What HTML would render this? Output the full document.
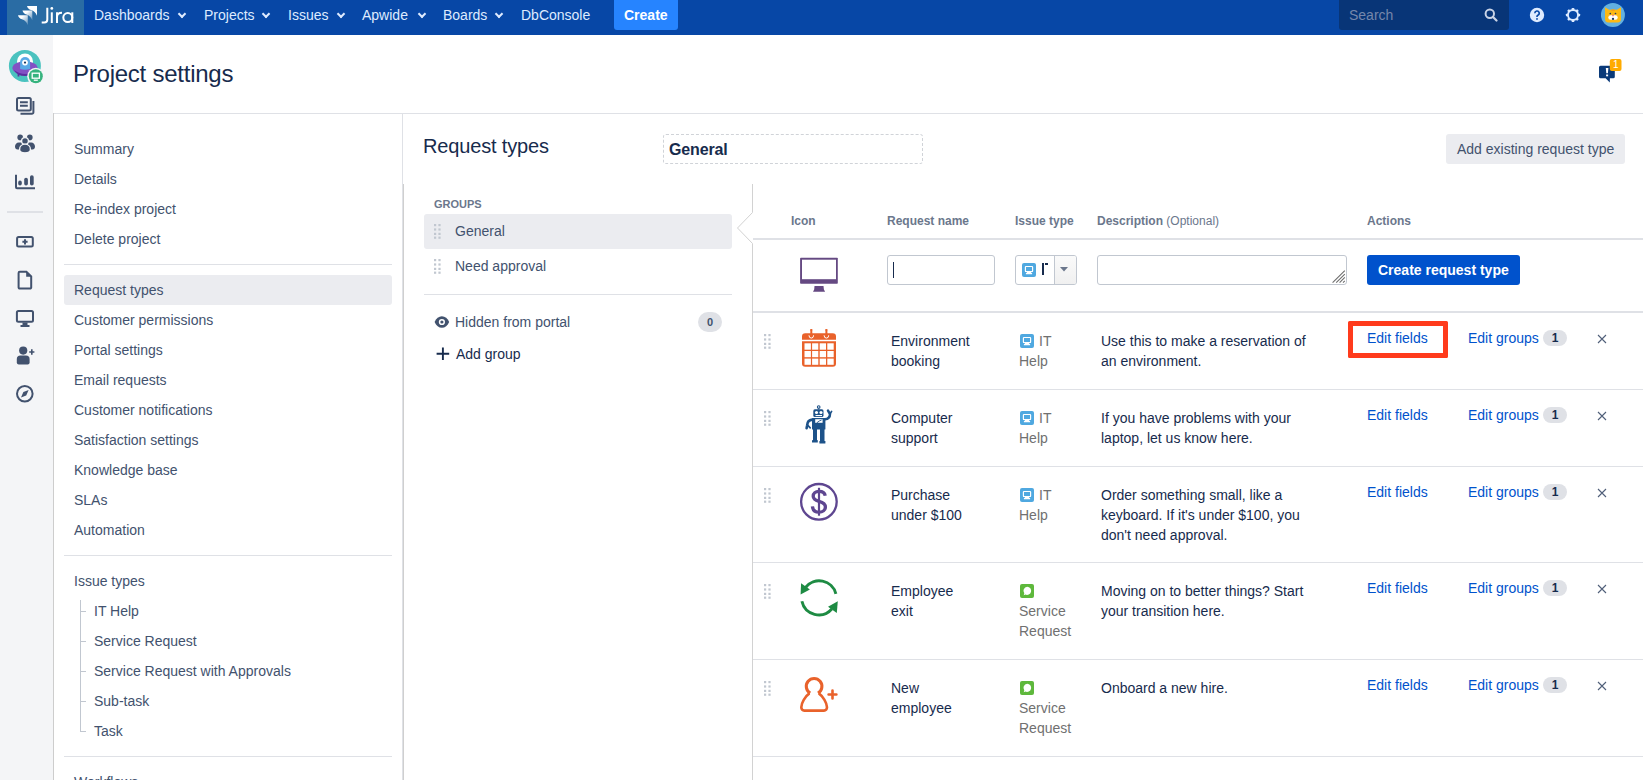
<!DOCTYPE html>
<html><head><meta charset="utf-8">
<style>
*{box-sizing:border-box;margin:0;padding:0}
html,body{width:1643px;height:780px;overflow:hidden;background:#fff;font-family:"Liberation Sans",sans-serif;font-size:14px;color:#172b4d}
.a{position:absolute;white-space:nowrap}
#nav{position:absolute;left:0;top:0;width:1643px;height:35px;background:#0747a6}
#logo{position:absolute;left:7px;top:0;width:77px;height:35px;background:#2a6ca4}
.ni{position:absolute;top:7px;color:#deebff;font-size:14px;line-height:16px;white-space:nowrap}
.chev{position:absolute;top:3.5px;width:6px;height:6px;border-right:2px solid #deebff;border-bottom:2px solid #deebff;transform:rotate(45deg)}
#side{position:absolute;left:0;top:35px;width:53px;height:745px;background:#f4f5f7}
.nl{position:absolute;left:74px;color:#42526e;font-size:14px;line-height:16px;white-space:nowrap}
.sep{position:absolute;height:1px;background:#dfe1e6}
.vl{position:absolute;width:1px;background:#dfe1e6}
.th{position:absolute;top:214px;font-size:12px;font-weight:bold;color:#6b778c;line-height:14px;white-space:nowrap}
.rn{position:absolute;font-size:14px;line-height:20px;color:#172b4d;white-space:nowrap}
.it{position:absolute;font-size:14px;line-height:20px;color:#707070;white-space:nowrap}
.ds{position:absolute;font-size:14px;line-height:20px;color:#172b4d;white-space:nowrap}
.lk{position:absolute;font-size:14px;line-height:16px;color:#0052cc;white-space:nowrap}
.bd{position:absolute;background:#dfe1e6;color:#172b4d;font-size:12px;font-weight:bold;border-radius:8px;text-align:center;line-height:16px;height:16px;width:24px}
.x{position:absolute;width:12px;height:12px}
.dh{position:absolute;width:7px;height:15px;background-image:radial-gradient(circle,#c1c7d0 1px,transparent 1.1px);background-size:3.5px 3.5px}
.iti{position:absolute;width:14px;height:14px;border-radius:2px}
</style></head><body>

<div id="nav">
  <div id="logo">
    <svg class="a" style="left:0;top:0" width="77" height="35" viewBox="7 0 77 35">
      <defs><linearGradient id="lg1" x1="0" y1="0" x2="1" y2="1"><stop offset="0.3" stop-color="#fff"/><stop offset="0.9" stop-color="#fff" stop-opacity=".35"/></linearGradient></defs>
      <path d="M27 6H37V15.8C35.5 12.5 34 10.8 31 10C29 9.4 27.5 8 27 6z" fill="#fff"/>
      <path d="M22.5 10.6H32.3V20.3C30.8 17 29.3 15.3 26.4 14.6C24.5 14 23 12.6 22.5 10.6z" fill="url(#lg1)"/>
      <path d="M18 15.2H27.8V25C26.3 21.7 24.8 20 21.9 19.2C20 18.6 18.5 17.2 18 15.2z" fill="url(#lg1)"/>
      <g fill="none" stroke="#fff" stroke-width="2">
        <path d="M47.3 7.8V19.5Q47.3 22.5 44.3 22.5H41.7"/>
        <path d="M51.8 12.3V23"/>
        <path d="M57 12.3V23M57 17Q57 12.8 62 12.8"/>
        <circle cx="67.8" cy="17.6" r="4.5"/>
        <path d="M72.3 12.3V23"/>
      </g>
      <circle cx="51.8" cy="8.4" r="1.4" fill="#fff"/>
    </svg>
  </div>
  <div class="ni" style="left:94px">Dashboards<span class="chev" style="left:85px"></span></div>
  <div class="ni" style="left:204px">Projects<span class="chev" style="left:59px"></span></div>
  <div class="ni" style="left:288px">Issues<span class="chev" style="left:50px"></span></div>
  <div class="ni" style="left:362px">Apwide<span class="chev" style="left:57px"></span></div>
  <div class="ni" style="left:443px">Boards<span class="chev" style="left:53px"></span></div>
  <div class="ni" style="left:521px">DbConsole</div>
  <div class="a" style="left:614px;top:-3px;width:64px;height:33px;background:#2684ff;border-radius:3px"></div>
  <div class="a" style="left:624px;top:7px;color:#fff;font-weight:bold;line-height:16px">Create</div>
  <div class="a" style="left:1339px;top:-3px;width:170px;height:33px;background:#083577;border-radius:3px"></div>
  <div class="a" style="left:1349px;top:7px;color:#7587ab;line-height:16px">Search</div>
  <svg class="a" style="left:1484px;top:8px" width="14" height="14" viewBox="0 0 14 14"><circle cx="5.8" cy="5.8" r="4.2" fill="none" stroke="#c9d3e6" stroke-width="2"/><path d="M9 9l3.5 3.5" stroke="#c9d3e6" stroke-width="2.2" stroke-linecap="round"/></svg>
  <svg class="a" style="left:1529px;top:7px" width="16" height="16" viewBox="0 0 16 16"><circle cx="8" cy="8" r="7.2" fill="#deebff"/><path d="M5.8 6.2a2.2 2.2 0 1 1 3.1 2c-.6.3-.9.7-.9 1.3v.5" fill="none" stroke="#0747a6" stroke-width="1.6"/><circle cx="8" cy="11.9" r="0.95" fill="#0747a6"/></svg>
  <svg class="a" style="left:1565px;top:7px" width="16" height="16" viewBox="0 0 16 16"><g fill="#deebff"><circle cx="8" cy="8" r="6"/><g transform="translate(8 8)"><rect x="-1.3" y="-7.1" width="2.6" height="14.2" rx=".6"/><rect x="-1.3" y="-7.1" width="2.6" height="14.2" rx=".6" transform="rotate(45)"/><rect x="-1.3" y="-7.1" width="2.6" height="14.2" rx=".6" transform="rotate(90)"/><rect x="-1.3" y="-7.1" width="2.6" height="14.2" rx=".6" transform="rotate(135)"/></g></g><circle cx="8" cy="8" r="4.1" fill="#0747a6"/></svg>
  <svg class="a" style="left:1601px;top:3px" width="24" height="24" viewBox="0 0 24 24"><circle cx="11.9" cy="12" r="12" fill="#62b0e0"/><path d="M4 4.3L8.2 6.8Q12 6.2 15.8 6.8L20 4.3V16.3Q20 19.4 16.8 19.4H7.2Q4 19.4 4 16.3z" fill="#fdb913"/><ellipse cx="12" cy="7.2" rx="1.9" ry="0.9" fill="#f29f1e"/><circle cx="9.3" cy="10.5" r="0.85" fill="#1d3b66"/><circle cx="14.5" cy="10.5" r="0.85" fill="#1d3b66"/><path d="M7.3 14.4Q7.3 12.2 9.6 12.2H14.4Q16.7 12.2 16.7 14.4Q16.7 16.7 14.4 16.7H9.6Q7.3 16.7 7.3 14.4z" fill="#fff"/><circle cx="12" cy="12.4" r="0.9" fill="#f47a7a"/><circle cx="12" cy="15.9" r="1.15" fill="#1d3b66"/></svg>
</div>

<div id="side">
  <svg class="a" style="left:0;top:0" width="53" height="745" viewBox="0 35 53 745">
    <!-- project avatar -->
    <circle cx="24.9" cy="65.9" r="16" fill="#4ac2bf"/>
    <circle cx="25" cy="61.4" r="8" fill="#fff"/>
    <ellipse cx="25" cy="68" rx="12.6" ry="6.8" fill="#8350c4"/>
    <path d="M14 70Q25 78 36 70Q33 76 25 76Q17 76 14 70z" fill="#5c2fa0"/>
    <rect x="17.6" y="73" width="1.8" height="3.5" fill="#5c2fa0"/>
    <path d="M20.1 69V62a5 5 0 0 1 10 0V69Q25 70.5 20.1 69z" fill="#5aa9e6"/>
    <path d="M17 61.5a8 8 0 0 1 16 0" fill="none" stroke="#fff" stroke-width="0"/>
    <circle cx="25" cy="62.6" r="2.9" fill="#fff"/>
    <circle cx="25" cy="62.6" r="1.1" fill="#1d3b66"/>
    <circle cx="35.8" cy="76.3" r="8.6" fill="#f4f5f7"/>
    <circle cx="35.8" cy="76.3" r="7" fill="#36b37e"/>
    <rect x="32.2" y="73.2" width="7.2" height="5" fill="none" stroke="#fff" stroke-width="1.3"/>
    <path d="M33.8 80.2h4" stroke="#fff" stroke-width="1.3"/>
    <g fill="none" stroke="#42526e" stroke-width="2">
      <!-- queues -->
      <rect x="17" y="98" width="13.8" height="12.6" rx="1.5"/>
      <path d="M20 102.3h7.8M20 105.8h7.8"/>
      <path d="M33.4 101v11.2a1.5 1.5 0 0 1-1.5 1.5H20.5"/>
      <!-- add screen -->
      <rect x="17.1" y="237" width="15.7" height="9.6" rx="1.5"/>
      <path d="M25 239.2v5.2M22.4 241.8h5.2"/>
      <!-- document -->
      <path d="M19.8 271.8h6.6l4.8 4.6v11a1.2 1.2 0 0 1-1.2 1.2h-10.2a1.2 1.2 0 0 1-1.2-1.2v-14.4a1.2 1.2 0 0 1 1.2-1.2z"/>
      <!-- monitor -->
      <rect x="16.9" y="310.9" width="16.1" height="10.8" rx="1.5"/>
      <!-- compass -->
      <circle cx="24.8" cy="393.8" r="7.8"/>
      <!-- reports axis -->
      <path d="M16 174.7v12.6a1 1 0 0 0 1 1h18"/>
    </g>
    <g fill="#42526e">
      <path d="M26.2 271.5l5.3 5.2h-5.3z"/>
      <path d="M22.5 322.5h5v2.6h2v2h-9v-2h2z"/>
      <rect x="18.2" y="180.6" width="3.6" height="4.9" rx="1.8"/>
      <rect x="24.2" y="177.8" width="3.7" height="7.7" rx="1.8"/>
      <rect x="30" y="175.2" width="3.7" height="10.3" rx="1.8"/>
      <!-- people -->
      <circle cx="20.2" cy="137.4" r="2.8"/><circle cx="29.8" cy="137.4" r="2.8"/>
      <path d="M15 146.5c0-2.3 1.6-4 3.8-4h3.6v7h-4.9c-1.4 0-2.5-1.1-2.5-3z"/>
      <path d="M35 146.5c0-2.3-1.6-4-3.8-4h-3.6v7h4.9c1.4 0 2.5-1.1 2.5-3z"/>
      <circle cx="25" cy="141" r="3.4" stroke="#f4f5f7" stroke-width="1.3"/>
      <path d="M19.6 149.4c0-2.9 2.2-5.2 5.4-5.2s5.4 2.3 5.4 5.2c0 2.2-2.2 3.4-5.4 3.4s-5.4-1.2-5.4-3.4z" stroke="#f4f5f7" stroke-width="1.3"/>
      <!-- person add -->
      <circle cx="23.2" cy="350.6" r="4.1"/>
      <path d="M16.8 359a3.6 3.6 0 0 1 3.6-3.6h5.6a3.6 3.6 0 0 1 3.6 3.6v3.6a2 2 0 0 1-2 2h-8.8a2 2 0 0 1-2-2z"/>
      <path d="M31 349.3h1.6v1.9h1.8v1.6h-1.8v1.9H31v-1.9h-1.8v-1.6H31z"/>
      <!-- compass needle -->
      <path d="M28.6 390L26.2 395.6 21 397.6 23.4 392z"/>
    </g>
    <rect x="7" y="211" width="36" height="2" fill="#dfe1e6"/>
  </svg>
</div>

<!-- header -->
<div class="a" style="left:73px;top:60px;font-size:24px;line-height:28px;letter-spacing:-0.24px;color:#172b4d">Project settings</div>
<div class="sep" style="left:53px;top:113px;width:1590px"></div>
<svg class="a" style="left:1597px;top:58px" width="26" height="26" viewBox="0 0 26 26">
  <path d="M2 9.3a1.5 1.5 0 0 1 1.5-1.5h12.8a1.5 1.5 0 0 1 1.5 1.5v9.5a1.5 1.5 0 0 1-1.5 1.5H12.9L12.8 24.6 8.6 20.3H3.5A1.5 1.5 0 0 1 2 18.8z" fill="#0a3a79"/>
  <path d="M8.8 10h2.6l-0.5 5.2h-1.6z" fill="#fff"/><rect x="9.1" y="16.5" width="2" height="1.8" fill="#fff"/>
  <rect x="12.8" y="1" width="11.7" height="12" rx="2" fill="#ffab00"/>
  <text x="18.7" y="10.3" font-family="Liberation Sans" font-size="10" fill="#fff" text-anchor="middle">1</text>
</svg>

<!--MAIN-->
<div class="nl" style="top:141px">Summary</div>
<div class="nl" style="top:171px">Details</div>
<div class="nl" style="top:201px">Re-index project</div>
<div class="nl" style="top:231px">Delete project</div>
<div class="sep" style="left:64px;top:264px;width:328px"></div>
<div class="a" style="left:64px;top:275px;width:328px;height:30px;background:#ebecf0;border-radius:3px"></div>
<div class="nl" style="top:282px">Request types</div>
<div class="nl" style="top:312px">Customer permissions</div>
<div class="nl" style="top:342px">Portal settings</div>
<div class="nl" style="top:372px">Email requests</div>
<div class="nl" style="top:402px">Customer notifications</div>
<div class="nl" style="top:432px">Satisfaction settings</div>
<div class="nl" style="top:462px">Knowledge base</div>
<div class="nl" style="top:492px">SLAs</div>
<div class="nl" style="top:522px">Automation</div>
<div class="sep" style="left:64px;top:555px;width:328px"></div>
<div class="nl" style="top:573px">Issue types</div>
<div class="nl" style="left:94px;top:603px">IT Help</div>
<div class="a" style="left:81px;top:611px;width:5px;height:1px;background:#c1c7d0"></div>
<div class="nl" style="left:94px;top:633px">Service Request</div>
<div class="a" style="left:81px;top:641px;width:5px;height:1px;background:#c1c7d0"></div>
<div class="nl" style="left:94px;top:663px">Service Request with Approvals</div>
<div class="a" style="left:81px;top:671px;width:5px;height:1px;background:#c1c7d0"></div>
<div class="nl" style="left:94px;top:693px">Sub-task</div>
<div class="a" style="left:81px;top:701px;width:5px;height:1px;background:#c1c7d0"></div>
<div class="nl" style="left:94px;top:723px">Task</div>
<div class="a" style="left:81px;top:731px;width:5px;height:1px;background:#c1c7d0"></div>
<div class="a" style="left:80px;top:600px;width:1px;height:132px;background:#c1c7d0"></div>
<div class="sep" style="left:64px;top:756px;width:328px"></div>
<div class="nl" style="top:774px">Workflows</div>
<div class="vl" style="left:402px;top:113px;height:667px"></div>
<div class="vl" style="left:53px;top:113px;height:667px;background:#cdcdcd"></div>
<div class="vl" style="left:403px;top:184px;height:596px;background:#cfcfcf"></div>
<div class="a" style="left:423px;top:134px;font-size:20px;line-height:24px;letter-spacing:-0.16px;color:#172b4d">Request types</div>
<div class="a" style="left:663px;top:134px;width:260px;height:30px;border:1px dashed #d0d3d8;border-radius:3px"></div>
<div class="a" style="left:669px;top:141px;font-size:16px;line-height:18px;font-weight:bold;letter-spacing:-0.16px;color:#172b4d">General</div>
<div class="a" style="left:1446px;top:134px;width:179px;height:30px;background:#ebecf0;border-radius:3px"></div>
<div class="a" style="left:1457px;top:141px;line-height:16px;color:#42526e">Add existing request type</div>
<div class="a" style="left:434px;top:198px;font-size:11px;line-height:12px;font-weight:bold;color:#6b778c">GROUPS</div>
<div class="a" style="left:424px;top:214px;width:308px;height:35px;background:#ebecf0;border-radius:3px"></div>
<svg class="a" style="left:433px;top:223px" width="8" height="16" viewBox="0 0 8 16"><g fill="#c1c7d0"><rect x="1" y="1" width="2.2" height="2.2"/><rect x="5.4" y="1" width="2.2" height="2.2"/><rect x="1" y="5.4" width="2.2" height="2.2"/><rect x="5.4" y="5.4" width="2.2" height="2.2"/><rect x="1" y="9.8" width="2.2" height="2.2"/><rect x="5.4" y="9.8" width="2.2" height="2.2"/><rect x="1" y="13.6" width="2.2" height="2.2"/><rect x="5.4" y="13.6" width="2.2" height="2.2"/></g></svg>
<div class="a" style="left:455px;top:223px;line-height:16px;color:#42526e">General</div>
<svg class="a" style="left:433px;top:258px" width="8" height="16" viewBox="0 0 8 16"><g fill="#c1c7d0"><rect x="1" y="1" width="2.2" height="2.2"/><rect x="5.4" y="1" width="2.2" height="2.2"/><rect x="1" y="5.4" width="2.2" height="2.2"/><rect x="5.4" y="5.4" width="2.2" height="2.2"/><rect x="1" y="9.8" width="2.2" height="2.2"/><rect x="5.4" y="9.8" width="2.2" height="2.2"/><rect x="1" y="13.6" width="2.2" height="2.2"/><rect x="5.4" y="13.6" width="2.2" height="2.2"/></g></svg>
<div class="a" style="left:455px;top:258px;line-height:16px;color:#42526e">Need approval</div>
<div class="sep" style="left:424px;top:294px;width:308px"></div>
<svg class="a" style="left:434px;top:315px" width="16" height="14" viewBox="0 0 16 14"><path d="M0.6 7C2.2 3.3 4.8 1.2 7.9 1.2S13.6 3.3 15.2 7C13.6 10.7 11 12.8 7.9 12.8S2.2 10.7 0.6 7z" fill="#42526e"/><circle cx="7.9" cy="7" r="3.1" fill="#fff"/><circle cx="7.9" cy="7" r="1.6" fill="#42526e"/></svg>
<div class="a" style="left:455px;top:314px;line-height:16px;color:#42526e">Hidden from portal</div>
<div class="a" style="left:698px;top:312px;width:24px;height:20px;border-radius:10px;background:#dfe1e6;color:#42526e;font-size:11px;font-weight:bold;line-height:20px;text-align:center">0</div>
<svg class="a" style="left:436px;top:347px" width="14" height="14" viewBox="0 0 14 14"><path d="M6.9 0.5v12.6M0.6 6.8h12.6" stroke="#172b4d" stroke-width="1.9"/></svg>
<div class="a" style="left:456px;top:346px;line-height:16px;color:#172b4d">Add group</div>
<svg class="a" style="left:730px;top:184px" width="30" height="600" viewBox="730 184 30 600"><path d="M752.5 184V212.5L737.5 228L752.5 243.5V780" fill="none" stroke="#d2d2d2" stroke-width="1"/></svg>
<div class="th" style="left:791px">Icon</div>
<div class="th" style="left:887px">Request name</div>
<div class="th" style="left:1015px">Issue type</div>
<div class="th" style="left:1097px">Description <span style="font-weight:normal">(Optional)</span></div>
<div class="th" style="left:1367px">Actions</div>
<div class="a" style="left:753px;top:238px;width:890px;height:2px;background:#dfe1e6"></div>
<svg class="a" style="left:800px;top:257px" width="39" height="36" viewBox="0 0 39 36"><rect x="0.1" y="0.8" width="37.7" height="26" rx="0.8" fill="#654982"/><rect x="2" y="2.7" width="34" height="19.5" fill="#fff"/><path d="M14.5 28.9h9l0.4 3.6 1.2 2.2H13l1.2-2.2z" fill="#654982"/></svg>
<div class="a" style="left:887px;top:255px;width:108px;height:30px;border:1px solid #c1c7d0;border-radius:3px;background:#fff"></div>
<div class="a" style="left:893px;top:262px;width:1px;height:16px;background:#172b4d"></div>
<div class="a" style="left:1015px;top:255px;width:62px;height:30px;border:1px solid #c1c7d0;border-radius:3px;background:#fff;overflow:hidden"><div class="a" style="left:38px;top:0;width:24px;height:28px;border-left:1px solid #c1c7d0;background:linear-gradient(#fafafa,#f0f0f0)"></div></div>
<svg class="a" style="left:1060px;top:267px" width="8" height="5" viewBox="0 0 8 5"><path d="M0 0h8L4 4.5z" fill="#6b778c"/></svg>
<svg class="a" style="left:1022px;top:263px" width="14" height="14" viewBox="0 0 14 14"><rect width="14" height="14" rx="2" fill="#4fa8e0"/><rect x="3.4" y="3.5" width="7.2" height="5" rx="0.6" fill="none" stroke="#fff" stroke-width="1.15"/><path d="M5 8.8h4l0.4 1.3h0.7v1.1H3.9v-1.1h0.7z" fill="#fff"/></svg>
<div class="a" style="left:1042px;top:263px;width:1.5px;height:12px;background:#172b4d"></div>
<div class="a" style="left:1044.5px;top:263px;width:3.5px;height:1.5px;background:#172b4d"></div>
<div class="a" style="left:1097px;top:255px;width:250px;height:30px;border:1px solid #c1c7d0;border-radius:3px;background:#fff"></div>
<svg class="a" style="left:1332px;top:270px" width="14" height="14" viewBox="0 0 14 14"><path d="M0.6 12.6L12.8 0.6M4.2 12.6L12.8 4.2M7.6 12.6L12.8 7.4M11 12.6L12.8 10.8" stroke="#6e6e6e" stroke-width="1.1"/></svg>
<div class="a" style="left:1367px;top:255px;width:153px;height:30px;background:#0052cc;border-radius:3px"></div>
<div class="a" style="left:1378px;top:262px;line-height:16px;font-weight:bold;color:#fff">Create request type</div>
<div class="a" style="left:753px;top:311px;width:890px;height:2px;background:#dfe1e6"></div>
<svg class="a" style="left:763px;top:333px" width="8" height="16" viewBox="0 0 8 16"><g fill="#c1c7d0"><rect x="1" y="1" width="2.2" height="2.2"/><rect x="5.4" y="1" width="2.2" height="2.2"/><rect x="1" y="5.4" width="2.2" height="2.2"/><rect x="5.4" y="5.4" width="2.2" height="2.2"/><rect x="1" y="9.8" width="2.2" height="2.2"/><rect x="5.4" y="9.8" width="2.2" height="2.2"/><rect x="1" y="13.6" width="2.2" height="2.2"/><rect x="5.4" y="13.6" width="2.2" height="2.2"/></g></svg>
<div class="rn" style="left:891px;top:331px">Environment<br>booking</div>
<svg class="a" style="left:1020px;top:334px" width="14" height="14" viewBox="0 0 14 14"><rect width="14" height="14" rx="2" fill="#4fa8e0"/><rect x="3.4" y="3.5" width="7.2" height="5" rx="0.6" fill="none" stroke="#fff" stroke-width="1.15"/><path d="M5 8.8h4l0.4 1.3h0.7v1.1H3.9v-1.1h0.7z" fill="#fff"/></svg>
<div class="it" style="left:1039px;top:331px">IT</div>
<div class="it" style="left:1019px;top:351px">Help</div>
<div class="ds" style="left:1101px;top:331px">Use this to make a reservation of<br>an environment.</div>
<div class="lk" style="left:1367px;top:330px">Edit fields</div>
<div class="lk" style="left:1468px;top:330px">Edit groups</div>
<div class="bd" style="left:1543px;top:330px">1</div>
<svg class="a" style="left:1597px;top:334px" width="10" height="10" viewBox="0 0 10 10"><path d="M1 1l8 8M9 1l-8 8" stroke="#505f79" stroke-width="1.1"/></svg>
<div class="a" style="left:753px;top:389px;width:890px;height:1px;background:#dfe1e6"></div>
<svg class="a" style="left:763px;top:410px" width="8" height="16" viewBox="0 0 8 16"><g fill="#c1c7d0"><rect x="1" y="1" width="2.2" height="2.2"/><rect x="5.4" y="1" width="2.2" height="2.2"/><rect x="1" y="5.4" width="2.2" height="2.2"/><rect x="5.4" y="5.4" width="2.2" height="2.2"/><rect x="1" y="9.8" width="2.2" height="2.2"/><rect x="5.4" y="9.8" width="2.2" height="2.2"/><rect x="1" y="13.6" width="2.2" height="2.2"/><rect x="5.4" y="13.6" width="2.2" height="2.2"/></g></svg>
<div class="rn" style="left:891px;top:408px">Computer<br>support</div>
<svg class="a" style="left:1020px;top:411px" width="14" height="14" viewBox="0 0 14 14"><rect width="14" height="14" rx="2" fill="#4fa8e0"/><rect x="3.4" y="3.5" width="7.2" height="5" rx="0.6" fill="none" stroke="#fff" stroke-width="1.15"/><path d="M5 8.8h4l0.4 1.3h0.7v1.1H3.9v-1.1h0.7z" fill="#fff"/></svg>
<div class="it" style="left:1039px;top:408px">IT</div>
<div class="it" style="left:1019px;top:428px">Help</div>
<div class="ds" style="left:1101px;top:408px">If you have problems with your<br>laptop, let us know here.</div>
<div class="lk" style="left:1367px;top:407px">Edit fields</div>
<div class="lk" style="left:1468px;top:407px">Edit groups</div>
<div class="bd" style="left:1543px;top:407px">1</div>
<svg class="a" style="left:1597px;top:411px" width="10" height="10" viewBox="0 0 10 10"><path d="M1 1l8 8M9 1l-8 8" stroke="#505f79" stroke-width="1.1"/></svg>
<div class="a" style="left:753px;top:466px;width:890px;height:1px;background:#dfe1e6"></div>
<svg class="a" style="left:763px;top:487px" width="8" height="16" viewBox="0 0 8 16"><g fill="#c1c7d0"><rect x="1" y="1" width="2.2" height="2.2"/><rect x="5.4" y="1" width="2.2" height="2.2"/><rect x="1" y="5.4" width="2.2" height="2.2"/><rect x="5.4" y="5.4" width="2.2" height="2.2"/><rect x="1" y="9.8" width="2.2" height="2.2"/><rect x="5.4" y="9.8" width="2.2" height="2.2"/><rect x="1" y="13.6" width="2.2" height="2.2"/><rect x="5.4" y="13.6" width="2.2" height="2.2"/></g></svg>
<div class="rn" style="left:891px;top:485px">Purchase<br>under $100</div>
<svg class="a" style="left:1020px;top:488px" width="14" height="14" viewBox="0 0 14 14"><rect width="14" height="14" rx="2" fill="#4fa8e0"/><rect x="3.4" y="3.5" width="7.2" height="5" rx="0.6" fill="none" stroke="#fff" stroke-width="1.15"/><path d="M5 8.8h4l0.4 1.3h0.7v1.1H3.9v-1.1h0.7z" fill="#fff"/></svg>
<div class="it" style="left:1039px;top:485px">IT</div>
<div class="it" style="left:1019px;top:505px">Help</div>
<div class="ds" style="left:1101px;top:485px">Order something small, like a<br>keyboard. If it's under $100, you<br>don't need approval.</div>
<div class="lk" style="left:1367px;top:484px">Edit fields</div>
<div class="lk" style="left:1468px;top:484px">Edit groups</div>
<div class="bd" style="left:1543px;top:484px">1</div>
<svg class="a" style="left:1597px;top:488px" width="10" height="10" viewBox="0 0 10 10"><path d="M1 1l8 8M9 1l-8 8" stroke="#505f79" stroke-width="1.1"/></svg>
<div class="a" style="left:753px;top:562px;width:890px;height:1px;background:#dfe1e6"></div>
<svg class="a" style="left:763px;top:583px" width="8" height="16" viewBox="0 0 8 16"><g fill="#c1c7d0"><rect x="1" y="1" width="2.2" height="2.2"/><rect x="5.4" y="1" width="2.2" height="2.2"/><rect x="1" y="5.4" width="2.2" height="2.2"/><rect x="5.4" y="5.4" width="2.2" height="2.2"/><rect x="1" y="9.8" width="2.2" height="2.2"/><rect x="5.4" y="9.8" width="2.2" height="2.2"/><rect x="1" y="13.6" width="2.2" height="2.2"/><rect x="5.4" y="13.6" width="2.2" height="2.2"/></g></svg>
<div class="rn" style="left:891px;top:581px">Employee<br>exit</div>
<svg class="a" style="left:1020px;top:584px" width="14" height="14" viewBox="0 0 14 14"><rect width="14" height="14" rx="2" fill="#5eb83c"/><path d="M7.2 2.7a4.1 4.1 0 1 1-1.9 7.8L3.7 11.2 4.3 9.3A4.1 4.1 0 0 1 7.2 2.7z" fill="#fff"/></svg>
<div class="it" style="left:1019px;top:601px">Service<br>Request</div>
<div class="ds" style="left:1101px;top:581px">Moving on to better things? Start<br>your transition here.</div>
<div class="lk" style="left:1367px;top:580px">Edit fields</div>
<div class="lk" style="left:1468px;top:580px">Edit groups</div>
<div class="bd" style="left:1543px;top:580px">1</div>
<svg class="a" style="left:1597px;top:584px" width="10" height="10" viewBox="0 0 10 10"><path d="M1 1l8 8M9 1l-8 8" stroke="#505f79" stroke-width="1.1"/></svg>
<div class="a" style="left:753px;top:659px;width:890px;height:1px;background:#dfe1e6"></div>
<svg class="a" style="left:763px;top:680px" width="8" height="16" viewBox="0 0 8 16"><g fill="#c1c7d0"><rect x="1" y="1" width="2.2" height="2.2"/><rect x="5.4" y="1" width="2.2" height="2.2"/><rect x="1" y="5.4" width="2.2" height="2.2"/><rect x="5.4" y="5.4" width="2.2" height="2.2"/><rect x="1" y="9.8" width="2.2" height="2.2"/><rect x="5.4" y="9.8" width="2.2" height="2.2"/><rect x="1" y="13.6" width="2.2" height="2.2"/><rect x="5.4" y="13.6" width="2.2" height="2.2"/></g></svg>
<div class="rn" style="left:891px;top:678px">New<br>employee</div>
<svg class="a" style="left:1020px;top:681px" width="14" height="14" viewBox="0 0 14 14"><rect width="14" height="14" rx="2" fill="#5eb83c"/><path d="M7.2 2.7a4.1 4.1 0 1 1-1.9 7.8L3.7 11.2 4.3 9.3A4.1 4.1 0 0 1 7.2 2.7z" fill="#fff"/></svg>
<div class="it" style="left:1019px;top:698px">Service<br>Request</div>
<div class="ds" style="left:1101px;top:678px">Onboard a new hire.</div>
<div class="lk" style="left:1367px;top:677px">Edit fields</div>
<div class="lk" style="left:1468px;top:677px">Edit groups</div>
<div class="bd" style="left:1543px;top:677px">1</div>
<svg class="a" style="left:1597px;top:681px" width="10" height="10" viewBox="0 0 10 10"><path d="M1 1l8 8M9 1l-8 8" stroke="#505f79" stroke-width="1.1"/></svg>
<div class="a" style="left:753px;top:756px;width:890px;height:1px;background:#dfe1e6"></div>
<div class="a" style="left:1348px;top:321px;width:100px;height:37px;border:5px solid #ff3b1c;border-radius:1.5px"></div>
<svg class="a" style="left:802px;top:329px" width="34" height="38" viewBox="0 0 34 38"><path d="M0 7.5a3.3 3.3 0 0 1 3.3-3.3h27.4A3.3 3.3 0 0 1 34 7.5v3.2H0z" fill="#e9622b"/><path d="M0 12.2h34v22.3a3.3 3.3 0 0 1-3.3 3.3H3.3A3.3 3.3 0 0 1 0 34.5z" fill="#e9622b"/><g fill="#fff"><rect x="2.5" y="14.3" width="6.4" height="6.4"/><rect x="10.1" y="14.3" width="6.2" height="6.4"/><rect x="17.7" y="14.3" width="6.3" height="6.4"/><rect x="25.3" y="14.3" width="6.4" height="6.4"/><rect x="2.5" y="22" width="6.4" height="6.2"/><rect x="10.1" y="22" width="6.2" height="6.2"/><rect x="17.7" y="22" width="6.3" height="6.2"/><rect x="25.3" y="22" width="6.4" height="6.2"/><rect x="2.5" y="29.6" width="6.4" height="6.2"/><rect x="10.1" y="29.6" width="6.2" height="6.2"/><rect x="17.7" y="29.6" width="6.3" height="6.2"/><rect x="25.3" y="29.6" width="6.4" height="6.2"/></g><g stroke="#fff" stroke-width="1" fill="none"><path d="M7 6.3a2.3 2.8 0 0 0 4.6 0M22.1 6.3a2.3 2.8 0 0 0 4.6 0"/></g><g stroke="#e9622b" stroke-width="2" fill="none"><path d="M9.3 0.2v7.4M24.4 0.2v7.4"/></g><g fill="#e9622b"><circle cx="9.3" cy="1" r="1"/><circle cx="24.4" cy="1" r="1"/></g></svg>
<svg class="a" style="left:795px;top:400px" width="50" height="50" viewBox="0 0 50 50"><g fill="#1d5289"><circle cx="23.7" cy="7" r="1.3" fill="none" stroke="#1d5289" stroke-width="1.1"/><rect x="23.2" y="8.2" width="1" height="1.4"/><rect x="18.3" y="9.3" width="10.2" height="7.8" rx="1.6"/><rect x="17" y="18" width="13.4" height="11.6" rx="0.5"/><rect x="18" y="29" width="4" height="12.5"/><rect x="25" y="29" width="4.5" height="13.5"/><rect x="17" y="40" width="5.8" height="2.6" rx="0.4"/><rect x="24.4" y="41" width="6" height="2.6" rx="0.4"/></g><g fill="none" stroke="#1d5289" stroke-linecap="round"><path d="M17.2 19.6C14.2 19.9 12.3 22 12.1 25.4L11.6 28.2" stroke-width="2.6"/><path d="M12.6 25.2L15.2 27.9" stroke-width="1.7"/><path d="M30 19.3C32.8 19 35 17.6 35 14L33 10.6" stroke-width="2.5"/><path d="M35 14L36.6 11.4" stroke-width="1.7"/></g><g fill="#fff"><circle cx="21.5" cy="12.5" r="1.55"/><circle cx="26" cy="12.5" r="1.55"/><rect x="20.5" y="15" width="6.5" height="1.1"/><path d="M20.2 19.2h7.4v3.6h-7.4z"/></g><path d="M21.8 22.8l2.8-2 2-0.8" stroke="#1d5289" stroke-width="0.9" fill="none"/></svg>
<svg class="a" style="left:795px;top:475px" width="50" height="50" viewBox="0 0 50 50"><circle cx="23.9" cy="26.8" r="17.8" fill="none" stroke="#5e4690" stroke-width="2.3"/><g fill="none" stroke="#5e4690"><path d="M24 12.8V40.7" stroke-width="2.2"/><path d="M30.2 20.8C29.8 17.8 27.4 16.4 24 16.4C20.4 16.4 18.2 18.3 18.2 21.2C18.2 24.4 21 25.4 24 26.3C27.6 27.3 30.4 28.5 30.4 32C30.4 35.2 27.6 37.2 24 37.2C20.2 37.2 17.8 35.3 17.4 31.4" stroke-width="3.3"/></g></svg>
<svg class="a" style="left:795px;top:572px" width="50" height="50" viewBox="0 0 50 50"><g fill="none" stroke="#1e8b43" stroke-width="2.9"><path d="M40.9 21.8A17.3 17.3 0 0 0 10.5 15.5"/><path d="M6.9 29.3A17.3 17.3 0 0 0 36.8 37"/></g><g fill="#1e8b43"><path d="M6.1 11.3L14.9 17.4 5.6 22.6z"/><path d="M42.8 29.3L41.8 40.9 33 34.8z"/></g></svg>
<svg class="a" style="left:795px;top:670px" width="50" height="50" viewBox="0 0 50 50"><g fill="none" stroke="#e9622b"><path d="M15.2 23.1A7.8 7.8 0 1 1 23 23.1" stroke-width="3.1"/><path d="M14.4 23.4C10 26.5 6.4 32.8 6.3 37.2c0 1.8 1.2 3.4 3 3.4h19.7c1.8 0 3-1.6 3-3.4C31.8 32.8 28.2 26.5 23.8 23.4" stroke-width="2.6"/><path d="M37.5 20.6v7.8M33.6 24.5h7.8" stroke-width="2.6" stroke-linecap="round"/></g></svg>
<!--/MAIN-->
</body></html>
